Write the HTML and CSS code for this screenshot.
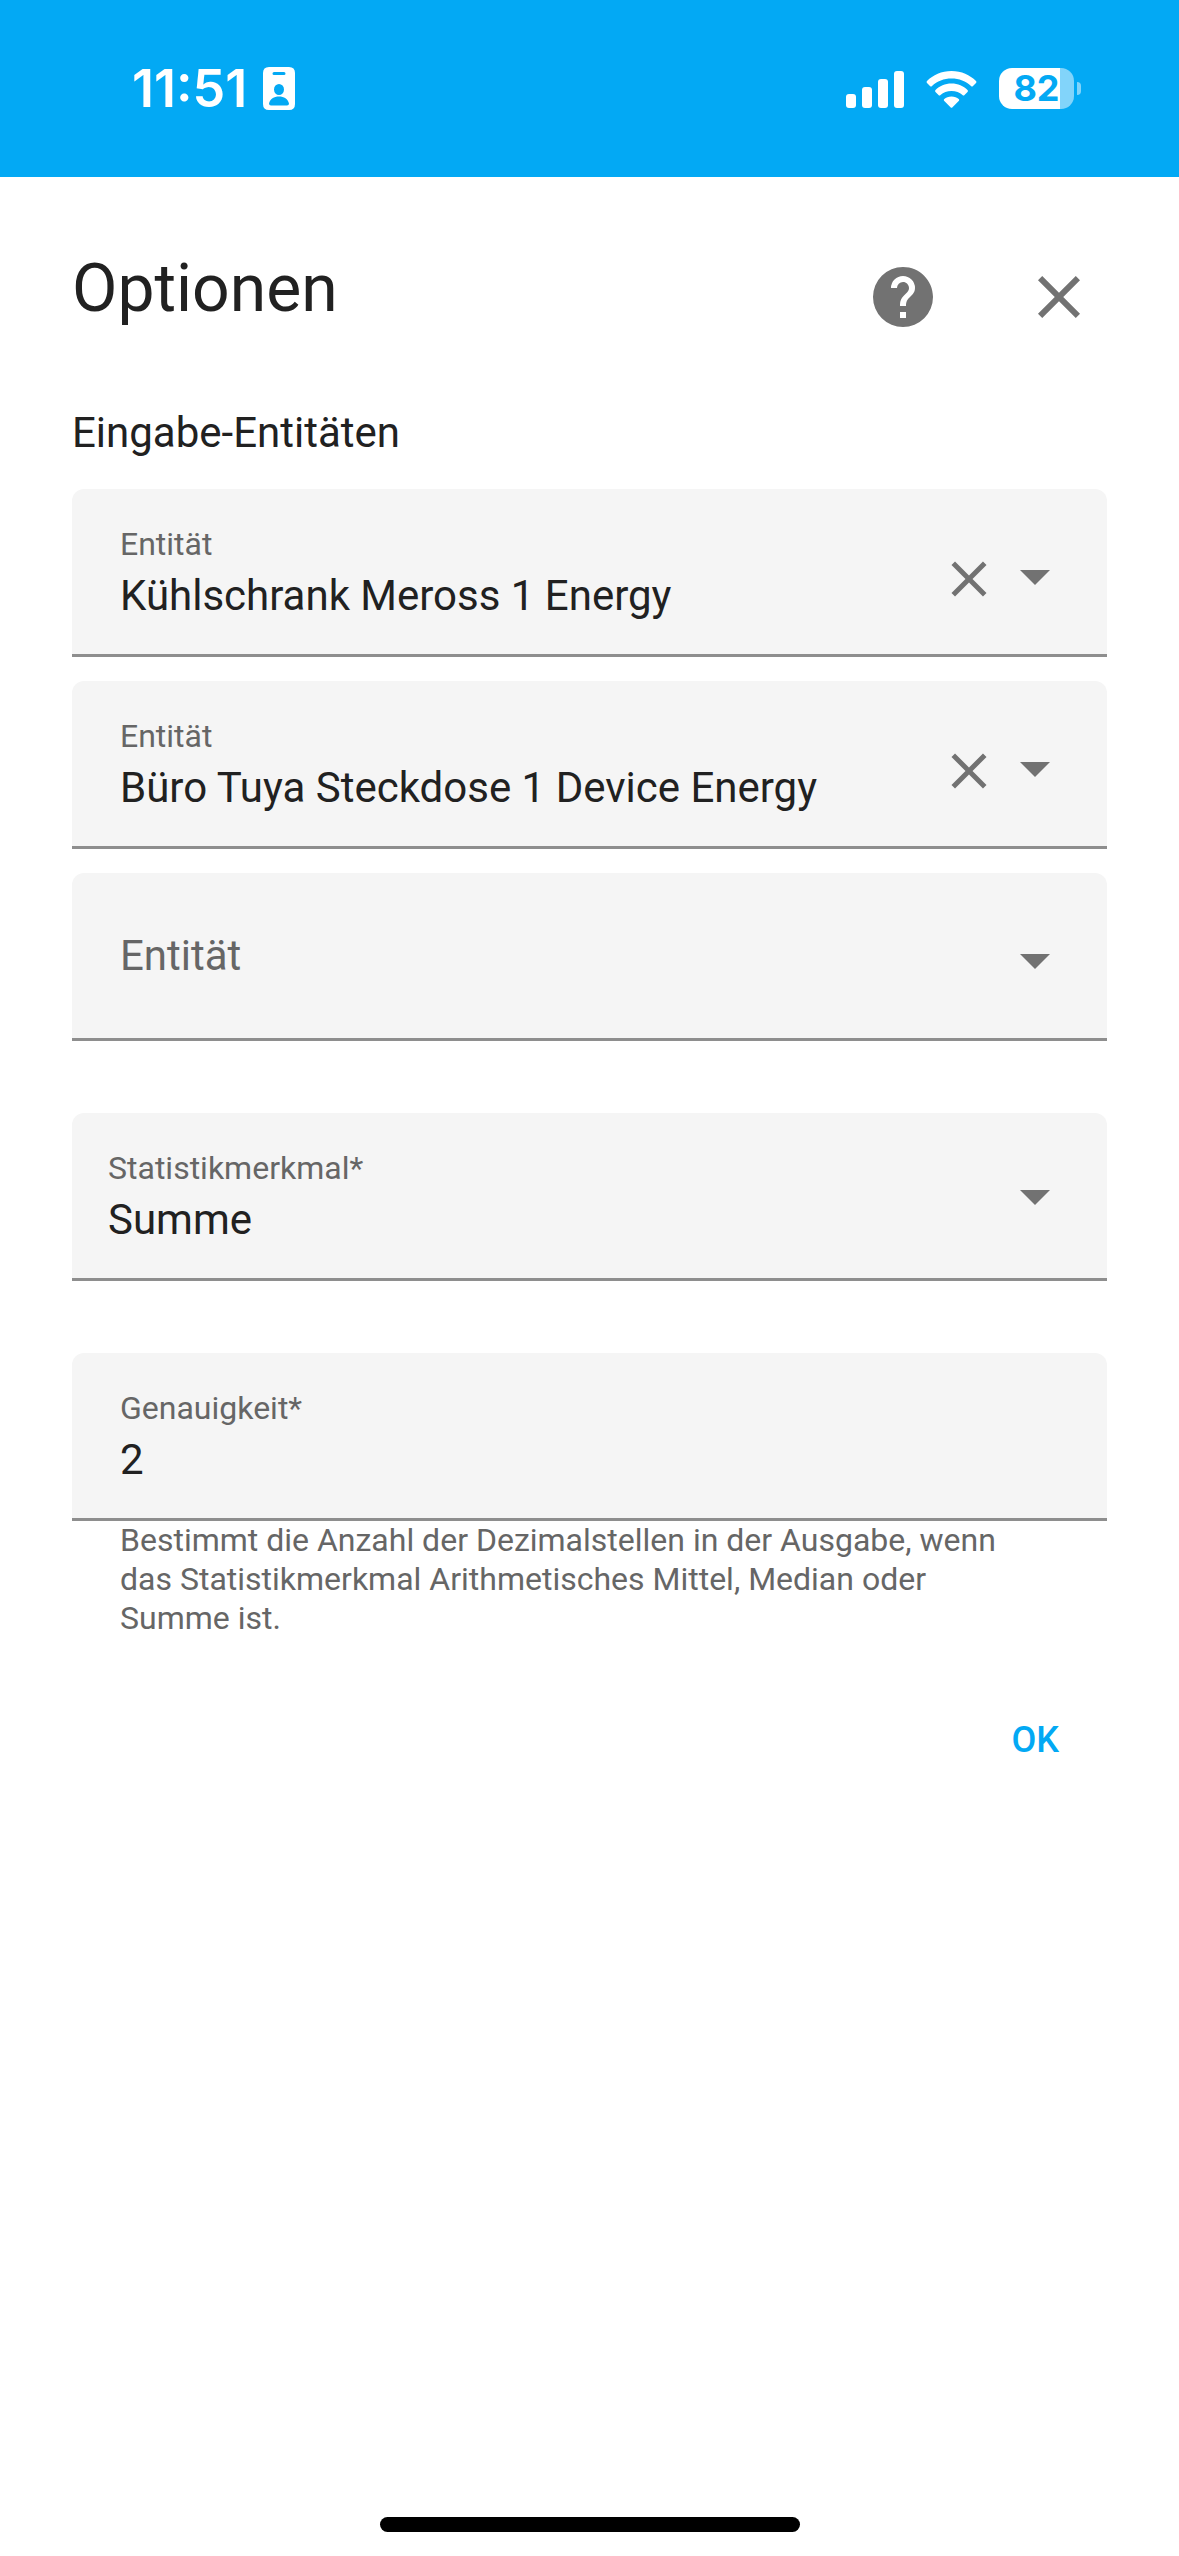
FILE: index.html
```html
<!DOCTYPE html>
<html lang="de">
<head>
    <meta charset="UTF-8">
    <meta name="viewport" content="width=device-width, initial-scale=1.0">
    <title>Optionen</title>
    <link rel="stylesheet" href="styles.css">
</head>
<body>
    <div class="status-bar">
        <div class="status-left">
            <span class="time">11:51</span>
            <svg width="32" height="43" viewBox="0 0 32 43">
                <path fill="#fff" fill-rule="evenodd" d="M6 0H26Q32 0 32 6V37Q32 43 26 43H6Q0 43 0 37V6Q0 0 6 0ZM11 5Q9.500 5 9.500 6.500T11 8H21Q22.500 8 22.500 6.500T21 5ZM16 17A5 5.500 0 0 0 16 28A5 5.500 0 0 0 16 17ZM8 38.500H24Q26 38.500 26 36.500C25 32 21 29.500 16 29.500S7 32 6 36.500Q6 38.500 8 38.500Z"/>
            </svg>
        </div>
        <div class="status-right">
            <svg width="58" height="38" viewBox="0 0 58 38" fill="#fff">
                <rect x="0" y="24" width="10" height="14" rx="3"/>
                <rect x="16" y="17" width="10" height="21" rx="3"/>
                <rect x="32" y="9" width="10" height="29" rx="3"/>
                <rect x="48" y="1" width="10" height="37" rx="3"/>
            </svg>
            <svg width="51" height="38" viewBox="0 0 51 38" fill="#fff">
                <path d="M25.500 1C35.500 1 44 5 50 11Q51 12 50 13L47 16Q46 17 45 16C40 11 33 8.500 25.500 8.500S11 11 6 16Q5 17 4 16L1 13Q0 12 1 11C7 5 15.500 1 25.500 1Z"/>
                <path d="M25.500 13.500C32 13.500 37.500 16 41.500 20Q42.500 21 41.500 22L38.500 25Q37.500 26 36.500 25C33.500 22.500 30 21 25.500 21S17.500 22.500 14.500 25Q13.500 26 12.500 25L9.500 22Q8.500 21 9.500 20C13.500 16 19 13.500 25.500 13.500Z"/>
                <path d="M25.500 26.500C28.500 26.500 31 27.500 32.700 29Q33.700 30 32.700 31L26.500 37.300Q25.500 38.300 24.500 37.300L18.300 31Q17.300 30 18.300 29C20 27.500 22.500 26.500 25.500 26.500Z"/>
            </svg>
            <div class="battery"><span class="battery-level">82</span></div>
        </div>
    </div>

    <main class="dialog">
        <header class="dialog-header">
            <h1>Optionen</h1>
            <button type="button" class="icon-button" aria-label="Hilfe">
                <svg class="icon" viewBox="0 0 24 24"><path d="M15.070 11.250L14.170 12.170C13.450 12.890 13 13.500 13 15H11V14.500C11 13.390 11.450 12.390 12.170 11.670L13.410 10.410C13.780 10.050 14 9.550 14 9C14 7.890 13.100 7 12 7A2 2 0 0 0 10 9H8A4 4 0 0 1 12 5A4 4 0 0 1 16 9C16 9.880 15.640 10.670 15.070 11.250M13 19H11V17H13M12 2A10 10 0 0 0 2 12A10 10 0 0 0 12 22A10 10 0 0 0 22 12C22 6.470 17.500 2 12 2Z"/></svg>
            </button>
            <button type="button" class="icon-button" aria-label="Schließen">
                <svg class="icon" viewBox="0 0 24 24"><path d="M19 6.410L17.590 5L12 10.590L6.410 5L5 6.410L10.590 12L5 17.590L6.410 19L12 13.410L17.590 19L19 17.590L13.410 12L19 6.410Z"/></svg>
            </button>
        </header>

        <form>
            <fieldset class="entities">
                <legend>Eingabe-Entitäten</legend>

                <div class="field">
                    <div class="field-text">
                        <label for="entity-1">Entität</label>
                        <input type="text" id="entity-1" value="Kühlschrank Meross 1 Energy">
                    </div>
                    <button type="button" class="icon-button clear" aria-label="Löschen">
                        <svg class="icon" viewBox="0 0 24 24"><path d="M19 6.410L17.590 5L12 10.590L6.410 5L5 6.410L10.590 12L5 17.590L6.410 19L12 13.410L17.590 19L19 17.590L13.410 12L19 6.410Z"/></svg>
                    </button>
                    <button type="button" class="icon-button toggle" aria-label="Auswählen">
                        <svg class="icon" viewBox="0 0 24 24"><path d="M7 10L12 15L17 10H7Z"/></svg>
                    </button>
                </div>

                <div class="field">
                    <div class="field-text">
                        <label for="entity-2">Entität</label>
                        <input type="text" id="entity-2" value="Büro Tuya Steckdose 1 Device Energy">
                    </div>
                    <button type="button" class="icon-button clear" aria-label="Löschen">
                        <svg class="icon" viewBox="0 0 24 24"><path d="M19 6.410L17.590 5L12 10.590L6.410 5L5 6.410L10.590 12L5 17.590L6.410 19L12 13.410L17.590 19L19 17.590L13.410 12L19 6.410Z"/></svg>
                    </button>
                    <button type="button" class="icon-button toggle" aria-label="Auswählen">
                        <svg class="icon" viewBox="0 0 24 24"><path d="M7 10L12 15L17 10H7Z"/></svg>
                    </button>
                </div>

                <div class="field">
                    <div class="field-text">
                        <input type="text" id="entity-3" placeholder="Entität" aria-label="Entität">
                    </div>
                    <button type="button" class="icon-button toggle" aria-label="Auswählen">
                        <svg class="icon" viewBox="0 0 24 24"><path d="M7 10L12 15L17 10H7Z"/></svg>
                    </button>
                </div>
            </fieldset>

            <div class="field field-select">
                <div class="field-text">
                    <label for="statistic">Statistikmerkmal*</label>
                    <select id="statistic" required>
                        <option>Arithmetisches Mittel</option>
                        <option>Median</option>
                        <option selected>Summe</option>
                    </select>
                </div>
                <svg class="icon" viewBox="0 0 24 24"><path d="M7 10L12 15L17 10H7Z"/></svg>
            </div>

            <div class="field">
                <div class="field-text">
                    <label for="precision">Genauigkeit*</label>
                    <input type="text" inputmode="numeric" id="precision" value="2" required aria-describedby="precision-help">
                </div>
            </div>
            <p class="help" id="precision-help">Bestimmt die Anzahl der Dezimalstellen in der Ausgabe, wenn das Statistikmerkmal Arithmetisches Mittel, Median oder Summe ist.</p>

            <div class="actions">
                <button type="submit" class="ok">OK</button>
            </div>
        </form>
    </main>

    <div class="home-indicator"></div>
</body>
</html>
```
FILE: styles.css
```css
* {
    box-sizing: border-box;
}
body {
    display: flex;
    flex-direction: column;
    min-height: 100vh;
    margin: 0;
    background: #fff;
    color: #212121;
    font-family: Roboto, sans-serif;
    font-size: 42px;
    line-height: 48px;
}
svg {
    display: block;
    flex: none;
}
button, input, select {
    padding: 0;
    border: none;
    background: none;
    color: inherit;
    font: inherit;
}

/* status bar */
.status-bar {
    display: flex;
    align-items: center;
    justify-content: space-between;
    height: 177px;
    padding: 0 105px 0 132px;
    background: #03a9f4;
    color: #fff;
    font-family: Inter, sans-serif;
}
.status-left {
    display: flex;
    align-items: center;
    gap: 16px;
}
.time {
    font-size: 52px;
    font-weight: 600;
}
.status-right {
    display: flex;
    align-items: center;
    gap: 22px;
}
.battery {
    position: relative;
    width: 75px;
    height: 41px;
    border-radius: 13px;
    background: linear-gradient(to right, #fff 82%, #82d4fa 82%);
    color: #03a9f4;
    text-align: center;
}
.battery::after {
    content: "";
    position: absolute;
    top: 14px;
    right: -7px;
    width: 4px;
    height: 13px;
    border-radius: 0 4px 4px 0;
    background: #82d4fa;
}
.battery-level {
    display: block;
    font-size: 36px;
    font-weight: 700;
    line-height: 41px;
}

/* dialog */
.dialog {
    flex: 1;
    padding: 72px;
}
.dialog-header {
    display: flex;
    align-items: center;
    gap: 84px;
    height: 96px;
    padding-right: 12px;
}
h1 {
    flex: 1;
    margin: 0 0 16px;
    font-size: 66px;
    font-weight: 400;
    line-height: 84px;
}
.icon-button {
    flex: none;
    cursor: pointer;
}
.icon {
    width: 72px;
    height: 72px;
    fill: #727272;
}
.toggle {
    padding-top: 8px;
}
.clear {
    padding-top: 14px;
}
.clear .icon {
    width: 60px;
    height: 60px;
}

.entities {
    margin: 0;
    padding: 0;
    border: none;
}
legend {
    padding: 64px 0 32px;
}
.field {
    display: flex;
    align-items: center;
    height: 168px;
    margin-bottom: 24px;
    padding: 0 36px 0 48px;
    border-bottom: 3px solid #8e8e8e;
    border-radius: 12px 12px 0 0;
    background: #f5f5f5;
}
.field-text {
    flex: 1;
    min-width: 0;
}
.field label {
    display: block;
    margin-bottom: 8px;
    color: #666;
    font-size: 32px;
    line-height: 40px;
}
.field input, .field select {
    display: block;
    width: 100%;
    height: 48px;
    outline: none;
    appearance: none;
}
.field input::placeholder {
    color: #666;
    opacity: 1;
}
.field-select {
    margin: 48px 0 72px;
    padding-left: 36px;
}
.help {
    margin: -24px 0 0;
    padding: 0 72px 0 48px;
    color: #666;
    font-size: 32px;
    line-height: 39px;
}
.actions {
    display: flex;
    justify-content: flex-end;
    padding: 48px 24px 0;
}
.ok {
    height: 108px;
    padding: 0 24px;
    color: #03a9f4;
    font-size: 36px;
    font-weight: 500;
    cursor: pointer;
}

.home-indicator {
    width: 420px;
    height: 15px;
    margin: 0 auto 24px;
    border-radius: 8px;
    background: #000;
}
```
